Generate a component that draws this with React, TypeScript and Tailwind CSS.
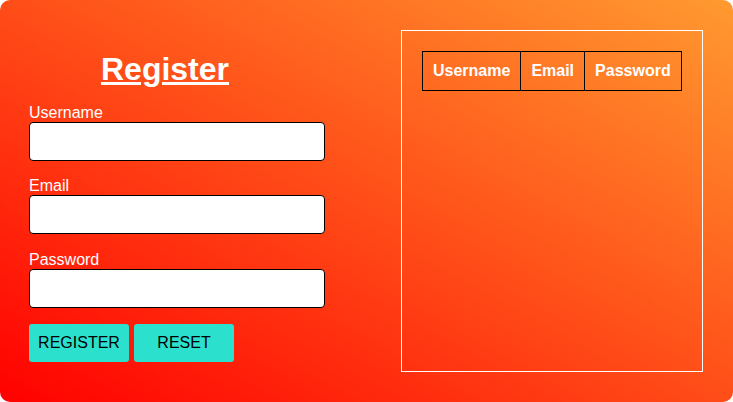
import React from 'react';

const Field = ({ label, type }: { label: string; type: string }) => (
  <div className="flex flex-col mb-4">
    <label className="text-white text-base leading-[18px]">{label}</label>
    <input
      type={type}
      className="h-[39px] w-[296px] bg-white border border-black rounded-[4px] px-2 outline-none"
    />
  </div>
);

const RegisterForm = () => {
  return (
    <div className="w-[330px] pl-[29px] pt-[51px] flex flex-col">
      <h1 className="w-[272px] text-center text-[32px] leading-[37px] font-bold text-white underline mb-[16px]">
        Register
      </h1>
      <Field label="Username" type="text" />
      <Field label="Email" type="email" />
      <div className="mt-px">
        <Field label="Password" type="password" />
      </div>
      <div className="flex gap-[5px]">
        <button className="w-[100px] h-[38px] bg-[#2be1ce] text-black text-base rounded-[3px]">REGISTER</button>
        <button className="w-[100px] h-[38px] bg-[#2be1ce] text-black text-base rounded-[3px]">RESET</button>
      </div>
    </div>
  );
};

const UserTable = () => {
  return (
    <div className="ml-[71px] mt-[30px] w-[302px] h-[342px] border border-white p-[20px]">
      <table className="border-collapse border border-black text-white font-bold text-base">
        <thead>
          <tr>
            <th className="border border-black px-[10px] h-[39px]">Username</th>
            <th className="border border-black px-[10px] h-[39px]">Email</th>
            <th className="border border-black px-[10px] h-[39px]">Password</th>
          </tr>
        </thead>
        <tbody></tbody>
      </table>
    </div>
  );
};

export default function App() {
  return (
    <div className="w-[733px] h-[402px] bg-white font-['Liberation_Sans',Arial,sans-serif]">
      <div className="w-full h-full rounded-[10px] bg-[linear-gradient(to_top_right,#ff0000,#ff9a30)] flex">
        <RegisterForm />
        <UserTable />
      </div>
    </div>
  );
}
